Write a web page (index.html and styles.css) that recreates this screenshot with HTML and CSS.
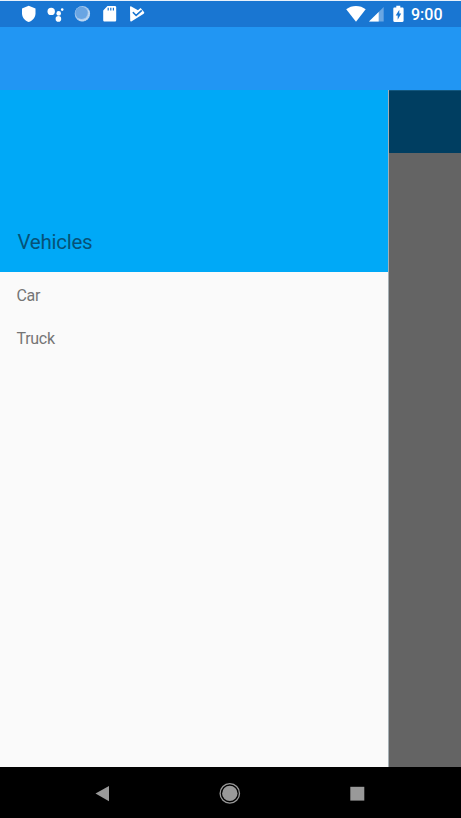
FILE: index.html
```html
<!DOCTYPE html>
<html lang="en">
<head>
<meta charset="utf-8">
<title>Vehicles</title>
<link rel="stylesheet" href="styles.css">
</head>
<body>
<div class="phone">
  <header class="status">
    <svg class="status-icons" width="461" height="27" viewBox="0 0 461 27" aria-hidden="true">
      <path fill="#fff" d="M28.7 5.8 22 8.4v4.8c0 4 2.8 7.5 6.7 8.7 3.9-1.2 6.8-4.7 6.8-8.7V8.4z"/>
      <g fill="#fff"><circle cx="51.2" cy="11.4" r="3.7"/><circle cx="58.7" cy="13.4" r="2.3"/><circle cx="62.2" cy="9.6" r="1.3"/><circle cx="58.4" cy="18.9" r="2.8"/></g>
      <circle cx="82.4" cy="13.8" r="7.7" fill="#a4c8ee"/>
      <circle cx="81.5" cy="12.9" r="6.2" fill="#69a5e3"/>
      <path d="M88.4 10.5a7 7 0 0 1-9.5 9.2" fill="none" stroke="#c5dcf4" stroke-width="1.4" stroke-dasharray="1.5 .5"/>
      <path fill="#fff" d="M107.5 6h7.3c.8 0 1.4.6 1.4 1.4v12.8c0 .8-.6 1.4-1.4 1.4h-10.2c-.8 0-1.4-.6-1.4-1.4v-9.8z"/>
      <path d="M108.2 7.7v2.8m2.6-2.8v2.8m2.6-2.8v2.8" stroke="#1976d2" stroke-width="1.2"/>
      <path fill="#fff" d="M130 7.2c0-.8.6-1 1.3-.7l6.7 3.8 3.2-1.6 2.8 3.4c.5.7.2 1.2-.3 1.6l-12 7.5c-.9.5-1.5.1-1.5-.8z"/>
      <path d="m132.9 12.2 3.2 3.1 5.7-5" fill="none" stroke="#1976d2" stroke-width="1.7"/>
      <path d="m132.7 9.8 3.4 3.2 4.8-4.5" fill="none" stroke="#fff" stroke-width="1.3"/>
      <path fill="#fff" d="M346.2 9.3c5.3-4.5 14.2-4.5 19.5 0L356 21.7z"/>
      <path fill="#6aa6e2" d="M383.7 7v14.6H369z"/>
      <path fill="#fff" d="M378.7 12v9.6H369z"/>
      <path fill="#fff" d="M396.3 5.8h4v1.7h2.1c.7 0 1.2.5 1.2 1.2v12c0 .7-.5 1.2-1.2 1.2h-7.9c-.7 0-1.2-.5-1.2-1.2v-12c0-.7.5-1.2 1.2-1.2h1.8z"/>
      <path fill="#1976d2" d="M399.3 9.8v3.7h1.9l-3.5 6.2v-4.3h-2z"/>
    </svg>
    <span class="time">9:00</span>
  </header>
  <div class="appbar"></div>
  <main class="content">
    <nav class="drawer">
      <div class="drawer-head">Vehicles</div>
      <ul class="menu"><li>Car</li><li>Truck</li></ul>
    </nav>
    <div class="scrim"><div class="scrim-bar"></div></div>
  </main>
  <footer class="navbar">
    <svg width="461" height="51" viewBox="0 0 461 51" aria-hidden="true">
      <path fill="#999" d="M95.5 26.6 109 19v15.2z"/>
      <circle cx="229.8" cy="26.4" r="7.7" fill="#999"/>
      <circle cx="229.8" cy="26.4" r="9.7" fill="none" stroke="#999" stroke-width="1.3"/>
      <rect x="350.3" y="19.8" width="14" height="13.8" fill="#999"/>
    </svg>
  </footer>
</div>
</body>
</html>
```
FILE: styles.css
```css
* { box-sizing: border-box; }
body { margin: 0; font-family: Roboto, "Liberation Sans", sans-serif; }
.phone { width: 461px; height: 818px; display: flex; flex-direction: column; overflow: hidden; background: #000; }
.status { display: grid; height: 27px; flex: none; background: #1976d2; border-top: 1px solid #e8f1fb; }
.status-icons { display: block; grid-area: 1 / 1; margin-top: -1px; }
.time { grid-area: 1 / 1; justify-self: end; padding: 4px 18.5px 0 0; font-size: 16px; line-height: 20px; font-weight: 500; color: #fff; }
.appbar { height: 63px; flex: none; background: #2196f3; }
.content { display: flex; height: 677px; flex: none; }
.drawer { width: 389px; background: #fafafa; border-right: 1px solid #a5afb4; }
.drawer-head { height: 182px; display: flex; align-items: flex-end; padding: 0 18px 18px 17.5px; background: #00a9f7; color: #065278; font-size: 20.5px; line-height: 24px; letter-spacing: -0.25px; }
.menu { list-style: none; margin: 0; padding: 2px 0 0 16.5px; color: #757575; font-size: 16px; letter-spacing: -0.3px; }
.menu li { height: 43px; line-height: 44px; }
.scrim { flex: 1; background: #646464; }
.scrim-bar { height: 63px; background: #003e61; border-top: 1px solid #12577f; }
.navbar { height: 51px; flex: none; background: #000; }
.navbar svg { display: block; }
```
